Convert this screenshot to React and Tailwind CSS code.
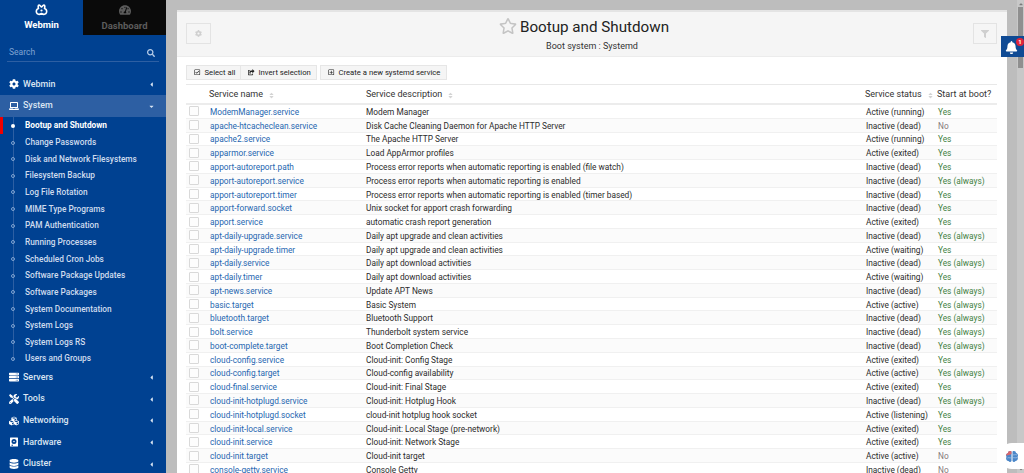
import React from "react";
import { FaCog, FaLaptop, FaServer, FaTools, FaCubes, FaDatabase, FaSearch, FaTachometerAlt, FaBell, FaFilter, FaRegStar, FaRegCheckSquare, FaRegPlusSquare, FaShareSquare, FaCaretLeft, FaCaretDown, FaCaretUp, FaSort } from "react-icons/fa";

const rows = [
  ["ModemManager.service","Modem Manager","Active (running)","Yes"],
  ["apache-htcacheclean.service","Disk Cache Cleaning Daemon for Apache HTTP Server","Inactive (dead)","No"],
  ["apache2.service","The Apache HTTP Server","Active (running)","Yes"],
  ["apparmor.service","Load AppArmor profiles","Active (exited)","Yes"],
  ["apport-autoreport.path","Process error reports when automatic reporting is enabled (file watch)","Inactive (dead)","Yes"],
  ["apport-autoreport.service","Process error reports when automatic reporting is enabled","Inactive (dead)","Yes (always)"],
  ["apport-autoreport.timer","Process error reports when automatic reporting is enabled (timer based)","Inactive (dead)","Yes"],
  ["apport-forward.socket","Unix socket for apport crash forwarding","Inactive (dead)","Yes"],
  ["apport.service","automatic crash report generation","Active (exited)","Yes"],
  ["apt-daily-upgrade.service","Daily apt upgrade and clean activities","Inactive (dead)","Yes (always)"],
  ["apt-daily-upgrade.timer","Daily apt upgrade and clean activities","Active (waiting)","Yes"],
  ["apt-daily.service","Daily apt download activities","Inactive (dead)","Yes (always)"],
  ["apt-daily.timer","Daily apt download activities","Active (waiting)","Yes"],
  ["apt-news.service","Update APT News","Inactive (dead)","Yes (always)"],
  ["basic.target","Basic System","Active (active)","Yes (always)"],
  ["bluetooth.target","Bluetooth Support","Inactive (dead)","Yes (always)"],
  ["bolt.service","Thunderbolt system service","Inactive (dead)","Yes (always)"],
  ["boot-complete.target","Boot Completion Check","Inactive (dead)","Yes (always)"],
  ["cloud-config.service","Cloud-init: Config Stage","Active (exited)","Yes"],
  ["cloud-config.target","Cloud-config availability","Active (active)","Yes (always)"],
  ["cloud-final.service","Cloud-init: Final Stage","Active (exited)","Yes"],
  ["cloud-init-hotplugd.service","Cloud-init: Hotplug Hook","Inactive (dead)","Yes (always)"],
  ["cloud-init-hotplugd.socket","cloud-init hotplug hook socket","Active (listening)","Yes"],
  ["cloud-init-local.service","Cloud-init: Local Stage (pre-network)","Active (exited)","Yes"],
  ["cloud-init.service","Cloud-init: Network Stage","Active (exited)","Yes"],
  ["cloud-init.target","Cloud-init target","Active (active)","No"],
  ["console-getty.service","Console Getty","Inactive (dead)","No"],
];

const subItems = ["Bootup and Shutdown","Change Passwords","Disk and Network Filesystems","Filesystem Backup","Log File Rotation","MIME Type Programs","PAM Authentication","Running Processes","Scheduled Cron Jobs","Software Package Updates","Software Packages","System Documentation","System Logs","System Logs RS","Users and Groups"];

function HardwareIcon({ className }) {
  return (
    <svg viewBox="0 0 20 20" className={className} fill="white">
      <path fillRule="evenodd" d="M3 1h14a1 1 0 0 1 1 1v16a1 1 0 0 1-1 1H3a1 1 0 0 1-1-1V2a1 1 0 0 1 1-1zm7 3a5 5 0 1 0 0 10a5 5 0 0 0 0-10zm0 3.5a1.5 1.5 0 1 1 0 3a1.5 1.5 0 0 1 0-3zM5 15.5h3v2H5z" />
    </svg>
  );
}

function NavItem({ icon: Icon, label, active }) {
  return (
    <div className={`relative flex items-center h-[21.7px] pl-[9px] pr-[11px] text-[8.9px] font-medium text-[#dbe6f3] ${active ? "bg-[#2d5fa3]" : ""}`}>
      <span className="w-[14px] flex justify-start"><Icon className="w-[10px] h-[10px] text-white" /></span>
      <span>{label}</span>
      <span className="ml-auto text-[#dbe6f3] text-[7px]">{active ? <FaCaretDown /> : <FaCaretLeft />}</span>
    </div>
  );
}

function Sidebar() {
  return (
    <aside className="w-[166px] shrink-0 h-full bg-[#004191] flex flex-col overflow-hidden">
      <div className="flex h-[36px] shrink-0">
        <div className="w-[83px] flex flex-col items-center pt-[4px] text-white">
          <svg width="13" height="12" viewBox="0 0 26 24" fill="none" stroke="white" strokeWidth="3.2" strokeLinejoin="round">
            <path d="M8 2 C6 2 6 6 7 9 C3 10 2 14 3 17 C4 21 9 22 13 19 C17 22 22 21 23 17 C24 14 23 10 19 9 C20 6 20 2 18 2 C16 2 15 5 13 6 C11 5 10 2 8 2 Z" />
            <circle cx="13" cy="13" r="2.2" fill="white" stroke="none" />
          </svg>
          <span className="text-[9.5px] font-bold leading-[12px] mt-[3px]">Webmin</span>
        </div>
        <div className="w-[83px] h-[35px] bg-[#0a0a0a] flex flex-col items-center pt-[4px] text-[#5c5c5c]">
          <FaTachometerAlt className="text-[12px]" />
          <span className="text-[9.5px] font-bold leading-[12px] mt-[4px]">Dashboard</span>
        </div>
      </div>
      <div className="mx-[7px] mt-[6px] h-[20px] pt-[2px] shrink-0 flex items-center justify-between pl-[3px] pr-[3px] border-b border-[#2d5fa3] text-[8.5px] text-[#7fa3d1]">
        <span className="-ml-[1px]">Search</span>
        <FaSearch className="text-[8px] text-[#b7cde8] mr-[1px]" />
      </div>
      <div className="mt-[11.5px] flex flex-col">
        <NavItem icon={FaCog} label="Webmin" />
        <NavItem icon={FaLaptop} label="System" active />
        <div className="relative flex flex-col pt-[0.5px] -mb-[0.5px]">
          <div className="absolute left-[13px] top-0 bottom-[7px] w-px bg-[#2d5fa3]" />
          {subItems.map((s, i) => (
            <div key={s} className={`relative flex items-center h-[16.65px] pl-[25px] text-[8.3px] ${i === 0 ? "font-bold text-white" : "font-medium text-[#cfdcee]"}`}>
              {i === 0 && <span className="absolute left-0 top-0 w-[3px] h-full bg-[#f00000]" />}
              <span className={`absolute left-[11px] top-[6.5px] w-[4px] h-[4px] rounded-full ${i === 0 ? "bg-white" : "border border-[#7fa3d1]"}`} />
              {s}
            </div>
          ))}
        </div>
        <NavItem icon={FaServer} label="Servers" />
        <NavItem icon={FaTools} label="Tools" />
        <NavItem icon={FaCubes} label="Networking" />
        <NavItem icon={HardwareIcon} label="Hardware" />
        <NavItem icon={FaDatabase} label="Cluster" />
      </div>
    </aside>
  );
}

function Header() {
  return (
    <div className="h-[44px] shrink-0 bg-[#f5f5f5] flex items-start justify-between pl-[9px] pr-[10px] pt-[11px] relative">
      <div className="w-[25px] h-[21px] border border-[#e3e3e3] flex items-center justify-center text-[#cfcfcf] text-[7px]"><FaCog /></div>
      <div className="absolute left-0 right-0 top-[4px] flex flex-col items-center text-[#222]">
        <div className="relative ml-[5px]">
          <FaRegStar className="absolute right-full top-[1px] mr-[3px] text-[18px] text-[#c4c4c4]" />
          <span className="text-[15.2px] leading-[22px] block whitespace-nowrap">Bootup and Shutdown</span>
        </div>
        <span className="text-[9px] leading-[12px] mt-[2px] text-[#333]">Boot system : Systemd</span>
      </div>
      <div className="w-[24px] h-[21px] border border-[#e3e3e3] flex items-center justify-center text-[#cfcfcf] text-[8px]"><FaFilter /></div>
    </div>
  );
}

function Btn({ icon: Icon, children, className = "" }) {
  return (
    <div className={`h-[15px] flex items-center gap-[4px] bg-[#f5f5f5] border border-[#e6e6e6] text-[7.7px] text-[#222] whitespace-nowrap ${className}`}>
      <Icon className="text-[6.5px] shrink-0" />
      {children}
    </div>
  );
}

function Table() {
  return (
    <div className="mt-[4px] border-t border-[#e8e8e8] text-[8.3px] text-[#2b2b2b]">
      <div className="flex items-center h-[20px] pt-[2px] border-b-2 border-[#ececec] text-[9px] text-[#333]">
        <div className="w-[23px]" />
        <div className="w-[157px] flex items-center">Service name<FaSort className="ml-[5px] text-[7px] text-[#d4d4d4]" /></div>
        <div className="w-[499px] flex items-center">Service description<FaSort className="ml-[5px] text-[7px] text-[#d4d4d4]" /></div>
        <div className="w-[72px] flex items-center whitespace-nowrap">Service status<FaSort className="ml-[5px] text-[7px] text-[#d4d4d4] shrink-0" /></div>
        <div className="whitespace-nowrap">Start at boot?</div>
      </div>
      {rows.map((r, i) => (
        <div key={r[0]} className={`flex items-center h-[13.77px] pt-[1.5px] border-b border-[#f0f0f0] ${i % 2 ? "bg-[#fbfbfb]" : "bg-white"}`}>
          <div className="w-[24px] pl-[3px] -mt-[1.5px]"><div className="w-[10px] h-[10px] bg-[#fdfdfd] border border-[#d9d9d9] rounded-[1px]" /></div>
          <div className="w-[156px] text-[#2566b0] whitespace-nowrap">{r[0]}</div>
          <div className="w-[500px] whitespace-nowrap">{r[1]}</div>
          <div className="w-[72px] whitespace-nowrap">{r[2]}</div>
          <div className={`whitespace-nowrap ${r[3] === "No" ? "text-[#857a7a]" : "text-[#3f7f3f]"}`}>{r[3]}</div>
        </div>
      ))}
    </div>
  );
}

function Brain() {
  return (
    <svg width="14" height="13" viewBox="0 0 28 26">
      <path d="M13 3 C9 1 6 3 6 6 C2 7 1 11 3 14 C1 17 3 22 7 22 C9 25 12 24 13 22 Z" fill="#4a86c8" />
      <path d="M13 3 C9 1 6 3 6 6 C3 7 2 9 2.5 11 C6 11 10 9 13 8 Z" fill="#d9656b" />
      <path d="M15 3 C19 1 22 3 22 6 C26 7 27 11 25 14 C27 17 25 22 21 22 C19 25 16 24 15 22 Z" fill="#4a86c8" />
      <path d="M15 9 C18 11 20 8 24 10 M15 16 C18 14 21 17 24 15 M5 16 C8 14 10 17 13 15" stroke="#a9c6e8" strokeWidth="1.5" fill="none" />
    </svg>
  );
}

export default function App() {
  return (
    <div className="w-[1024px] h-[473px] flex overflow-hidden bg-[#bdbdbd] relative" style={{ fontFamily: "Roboto, sans-serif" }}>
      <Sidebar />
      <div className="w-[11px] shrink-0" />
      <main className="w-[830px] mt-[10px] shrink-0 flex flex-col bg-white border-t-2 border-[#e4e4e4] overflow-hidden">
        <Header />
        <div className="h-px bg-[#ececec] shrink-0" />
        <div className="pl-[9px] pr-[10px] pt-[8px]">
          <div className="flex">
            <Btn icon={FaRegCheckSquare} className="w-[55px] pl-[7px]">Select all</Btn>
            <Btn icon={FaShareSquare} className="w-[76px] pl-[7px] border-l-0">Invert selection</Btn>
            <div className="w-[3px]" />
            <Btn icon={FaRegPlusSquare} className="w-[127px] pl-[7px]">Create a new systemd service</Btn>
          </div>
          <Table />
        </div>
      </main>
      <div className="w-[10px] shrink-0" />
      <div className="w-[7px] shrink-0 bg-[#c8c8c8] flex flex-col items-center text-[#7a7a7a] text-[6px]">
        <FaCaretUp className="mt-[1px] h-[6px] shrink-0" />
        <div className="h-[61px] w-[5px] bg-[#8f8f8f] shrink-0" />
        <FaCaretDown className="mt-auto mb-[1px] h-[6px] shrink-0" />
      </div>
      <div className="absolute left-[1001px] top-[36px] w-[23px] h-[21px] bg-[#0f4a94] flex items-center justify-center">
        <FaBell className="text-[13px] text-white -ml-[2px] mt-[2px]" />
        <span className="absolute right-[0px] top-[2px] w-[8px] h-[8px] rounded-full bg-[#e0243a] text-white text-[6px] leading-[8px] text-center font-bold">1</span>
      </div>
      <div className="absolute left-[999px] top-[443px] w-[25px] h-[26px] bg-white rounded-l-full flex items-center justify-center">
        <Brain />
      </div>
    </div>
  );
}
